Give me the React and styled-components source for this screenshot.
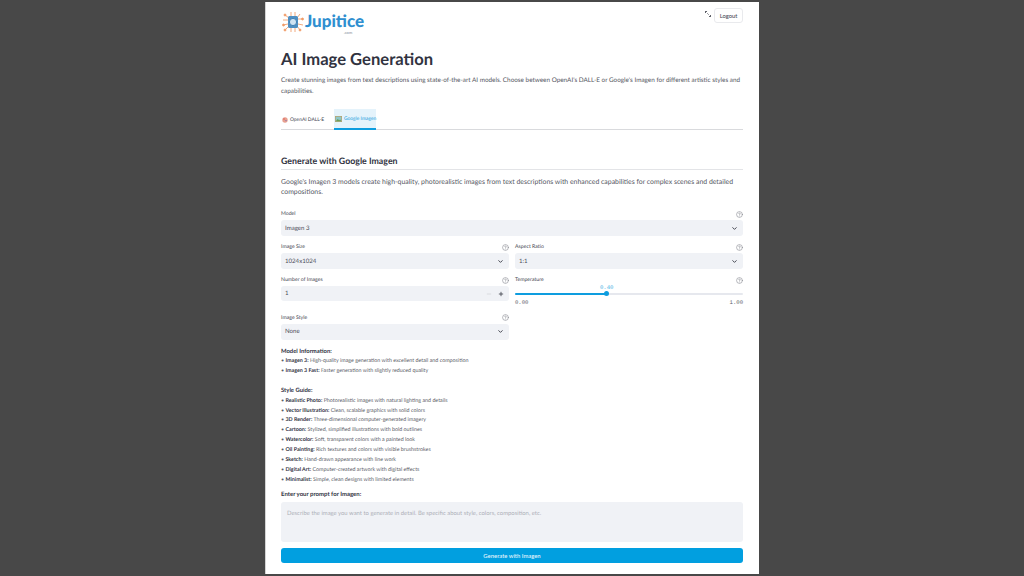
import React from 'react';
import styled, { createGlobalStyle } from 'styled-components';
import { ChevronDown, CircleHelp, Minus, Plus } from 'lucide-react';

const GlobalStyle = createGlobalStyle`
  html, body {
    margin: 0;
    height: 100%;
    background: #484848;
    font-family: 'Lato', 'Noto Sans', sans-serif;
    color: #31333f;
    overflow: hidden;
    text-rendering: geometricPrecision;
  }
  * { box-sizing: border-box; }
`;

const Page = styled.div`
  width: 1024px;
  height: 576px;
  padding: 2px 0;
  display: flex;
  justify-content: center;
`;

const Panel = styled.main`
  width: 494px;
  height: 572px;
  background: #fff;
  padding: 8px 16px 0;
  box-shadow: inset 1px 0 0 #d4d4d4;
  display: flex;
  flex-direction: column;
`;

const Header = styled.header`
  display: flex;
  justify-content: space-between;
  align-items: flex-start;
  height: 24px;
`;

const Logo = styled.div`
  display: flex;
  align-items: center;
  height: 24px;
  margin-left: 1px;
  position: relative;
`;

const LogoText = styled.span`
  font-size: 17px;
  font-weight: 900;
  color: #2f8fd0;
  line-height: 16px;
  margin: 0 0 2px 1px;
`;

const LogoTie = styled.span`
  color: #6f7a85;
`;

const LogoCom = styled.span`
  position: absolute;
  right: 12px;
  bottom: -1px;
  font-size: 4px;
  line-height: 4px;
  color: #7d8a96;
`;

const HeaderActions = styled.div`
  display: flex;
  align-items: flex-start;
  gap: 2px;
  margin-top: -2px;
`;

const LogoutButton = styled.button`
  width: 29px;
  height: 15px;
  padding: 0;
  background: #fff;
  border: 1px solid #e9eaed;
  border-radius: 3px;
  font: 500 5.8px 'Lato', sans-serif;
  color: #4a4c58;
`;

const Title = styled.h1`
  margin: 13px 0 0;
  font-size: 16.6px;
  line-height: 24px;
  font-weight: 700;
  color: #31333f;
`;

const Lead = styled.p`
  margin: 5px 0 0;
  font-size: 6.36px;
  line-height: 10.8px;
  color: #555763;
`;

const Tabs = styled.nav`
  display: flex;
  margin-top: 11px;
  height: 21px;
  border-bottom: 1px solid #d9dadd;
`;

const Tab = styled.div`
  display: flex;
  align-items: center;
  gap: 2px;
  height: 21px;
  flex: none;
  padding: 1px 0 0 1px;
  width: ${p => (p.$active ? '42px' : '53px')};
  font-size: 4.9px;
  white-space: nowrap;
  color: ${p => (p.$active ? '#1c9ddd' : '#41434f')};
  background: ${p => (p.$active ? '#e5f3fb' : 'transparent')};
  border-bottom: ${p => (p.$active ? '2px solid #0e9ddf' : 'none')};
  svg { flex: none; }
`;

const SectionTitle = styled.h2`
  margin: 24px 0 0;
  padding-bottom: 2px;
  font-size: 8.8px;
  line-height: 13px;
  font-weight: 700;
  color: #31333f;
  border-bottom: 1px solid #e3e4e7;
`;

const SectionText = styled(Lead)`
  margin-top: 7px;
  font-size: 6.9px;
  line-height: 10.2px;
`;

const FormGrid = styled.div`
  display: grid;
  grid-template-columns: 228px 228px;
  column-gap: 6px;
  margin-top: 11.5px;
`;

const Field = styled.div`
  grid-column: ${p => (p.$wide ? '1 / -1' : 'auto')};
  height: ${p => p.$height || 33}px;
`;

const LabelRow = styled.div`
  display: flex;
  justify-content: space-between;
  align-items: center;
  height: 11px;
  font-size: 5.2px;
  color: #42444f;
`;

const HelpIcon = styled(CircleHelp)`
  width: 7px;
  height: 7px;
  color: #85868f;
`;

const SelectBox = styled.div`
  display: flex;
  justify-content: space-between;
  align-items: center;
  height: ${p => p.$height || 16}px;
  margin-top: 0.5px;
  padding: 0 5px 0 4px;
  background: #f0f2f6;
  border-radius: 3px;
  font-size: 6.1px;
  color: #4a4c58;
`;

const Chevron = styled(ChevronDown)`
  width: 7px;
  height: 7px;
  color: #31333f;
  stroke-width: 3;
`;

const Stepper = styled.div`
  display: flex;
  align-items: center;
  gap: 6px;
`;

const SliderValue = styled.div`
  height: 6px;
  line-height: 6px;
  margin: -2px 0 0 85px;
  font: 5.6px 'Liberation Mono', monospace;
  color: #4cb4e6;
`;

const Track = styled.div`
  position: relative;
  height: 2px;
  margin-top: 3px;
  background: #e6e8ee;
  border-radius: 1px;
`;

const Fill = styled.div`
  height: 2px;
  background: #0e9ddf;
  border-radius: 1px;
`;

const Thumb = styled.div`
  position: absolute;
  top: -1.5px;
  width: 5px;
  height: 5px;
  margin-left: -2.5px;
  border-radius: 50%;
  background: #0e9ddf;
`;

const SliderRange = styled.div`
  display: flex;
  justify-content: space-between;
  margin-top: 4px;
  font: 5.6px 'Liberation Mono', monospace;
  color: #5d5f69;
`;

const InfoBlock = styled.section`
  margin-top: ${p => p.$gap}px;
  font-size: 5.33px;
  color: #5b5d68;
`;

const InfoHeading = styled.div`
  font-size: 5.9px;
  font-weight: 700;
  line-height: 10.5px;
  color: #31333f;
`;

const InfoLine = styled.div`
  height: 9.87px;
  line-height: 9.87px;
  white-space: nowrap;
  b { font-weight: 700; color: #31333f; }
`;

const PromptLabel = styled.div`
  margin-top: 4.2px;
  height: 10px;
  line-height: 10px;
  font-size: 6px;
  font-weight: 700;
  color: #31333f;
`;

const PromptBox = styled.div`
  height: 40px;
  margin-top: 2px;
  padding: 8px 6px;
  background: #f0f2f6;
  border-radius: 3px;
  font-size: 5.9px;
  line-height: 8px;
  color: #aeb0b8;
`;

const GenerateButton = styled.button`
  height: 15px;
  margin-top: 6px;
  padding: 0;
  width: 100%;
  border: none;
  border-radius: 3px;
  background: #019fe0;
  color: #e8f6fd;
  font: 500 5.9px 'Lato', sans-serif;
`;

const models = [
  ['Imagen 3', 'High-quality image generation with excellent detail and composition'],
  ['Imagen 3 Fast', 'Faster generation with slightly reduced quality'],
];

const styles = [
  ['Realistic Photo', 'Photorealistic images with natural lighting and details'],
  ['Vector Illustration', 'Clean, scalable graphics with solid colors'],
  ['3D Render', 'Three-dimensional computer-generated imagery'],
  ['Cartoon', 'Stylized, simplified illustrations with bold outlines'],
  ['Watercolor', 'Soft, transparent colors with a painted look'],
  ['Oil Painting', 'Rich textures and colors with visible brushstrokes'],
  ['Sketch', 'Hand-drawn appearance with line work'],
  ['Digital Art', 'Computer-created artwork with digital effects'],
  ['Minimalist', 'Simple, clean designs with limited elements'],
];

const LogoMark = () => (
  <svg width="22" height="22" viewBox="0 0 22 22">
    <g stroke="#f0a070" strokeWidth="0.9" fill="#f0945a">
      <path d="M3 4l4 3M1 9h5M1 14l5-1M3 19l4-4M18 3l-3 4M21 8h-5M21 14l-5-1M18 19l-3-4M9 1v4M13 1v4M9 21v-4M13 21v-4" fill="none" />
      <circle cx="3" cy="4" r="1" />
      <circle cx="1.5" cy="14" r="1" />
      <circle cx="3" cy="19" r="1" />
      <circle cx="20.5" cy="8" r="1" />
      <circle cx="18" cy="19" r="1" />
    </g>
    <rect x="6" y="5" width="10" height="12" rx="1.5" fill="#4f8fc2" />
    <circle cx="11" cy="11" r="3.6" fill="#cfe3f2" stroke="#3f80b5" strokeWidth="1" />
  </svg>
);

const ExpandIcon = () => (
  <svg width="8" height="8" viewBox="0 0 8 8" style={{ marginTop: 2 }}>
    <path d="M1 1h2v1H2v1H1zM7 7H5V6h1V5h1z" fill="#5f6169" />
    <path d="M3 3l2 2" stroke="#5f6169" strokeWidth="0.6" />
  </svg>
);

const PaletteIcon = () => (
  <svg width="6" height="6" viewBox="0 0 6 6">
    <circle cx="3" cy="3" r="2.7" fill="#e8a090" />
    <circle cx="2" cy="2" r="0.7" fill="#d9534f" />
    <circle cx="4" cy="3.6" r="0.7" fill="#7d6fb3" />
  </svg>
);

const PictureIcon = () => (
  <svg width="7" height="6" viewBox="0 0 7 6">
    <rect width="7" height="6" fill="#b9a26a" />
    <rect x="0.7" y="0.7" width="5.6" height="4.6" fill="#8fc7c9" />
    <path d="M0.7 5.3l2-2.4 1.5 1.4 1-.8 1.1 1.8z" fill="#6f9e55" />
  </svg>
);

const SelectField = ({ label, value, wide }) => (
  <Field $wide={wide}>
    <LabelRow>{label}<HelpIcon /></LabelRow>
    <SelectBox>{value}<Chevron /></SelectBox>
  </Field>
);

const InfoList = ({ items }) =>
  items.map(([name, text]) => (
    <InfoLine key={name}>• <b>{name}:</b> {text}</InfoLine>
  ));

export default function App() {
  return (
    <Page>
      <GlobalStyle />
      <Panel>
        <Header>
          <Logo>
            <LogoMark />
            <LogoText>Jupit<LogoTie>i</LogoTie>ce</LogoText>
            <LogoCom>.com</LogoCom>
          </Logo>
          <HeaderActions>
            <ExpandIcon />
            <LogoutButton>Logout</LogoutButton>
          </HeaderActions>
        </Header>

        <Title>AI Image Generation</Title>
        <Lead>
          Create stunning images from text descriptions using state-of-the-art AI models. Choose between
          OpenAI's DALL-E or Google's Imagen for different artistic styles and capabilities.
        </Lead>

        <Tabs>
          <Tab><PaletteIcon />OpenAI DALL-E</Tab>
          <Tab $active><PictureIcon />Google Imagen</Tab>
        </Tabs>

        <SectionTitle>Generate with Google Imagen</SectionTitle>
        <SectionText>
          Google's Imagen 3 models create high-quality, photorealistic images from text descriptions with
          enhanced capabilities for complex scenes and detailed compositions.
        </SectionText>

        <FormGrid>
          <SelectField wide label="Model" value="Imagen 3" />
          <SelectField label="Image Size" value="1024x1024" />
          <SelectField label="Aspect Ratio" value="1:1" />
          <Field $height={37.5}>
            <LabelRow>Number of Images<HelpIcon /></LabelRow>
            <SelectBox $height={15}>
              1
              <Stepper>
                <Minus size={6} color="#c4c5ca" />
                <Plus size={6} color="#31333f" strokeWidth={3} />
              </Stepper>
            </SelectBox>
          </Field>
          <Field $height={37.5}>
            <LabelRow>Temperature<HelpIcon /></LabelRow>
            <SliderValue>0.40</SliderValue>
            <Track>
              <Fill style={{ width: '40%' }} />
              <Thumb style={{ left: '40%' }} />
            </Track>
            <SliderRange><span>0.00</span><span>1.00</span></SliderRange>
          </Field>
          <SelectField label="Image Style" value="None" />
        </FormGrid>

        <InfoBlock $gap={1.5}>
          <InfoHeading>Model Information:</InfoHeading>
          <InfoList items={models} />
        </InfoBlock>
        <InfoBlock $gap={9.5}>
          <InfoHeading>Style Guide:</InfoHeading>
          <InfoList items={styles} />
        </InfoBlock>

        <PromptLabel>Enter your prompt for Imagen:</PromptLabel>
        <PromptBox>Describe the image you want to generate in detail. Be specific about style, colors, composition, etc.</PromptBox>
        <GenerateButton>Generate with Imagen</GenerateButton>
      </Panel>
    </Page>
  );
}
